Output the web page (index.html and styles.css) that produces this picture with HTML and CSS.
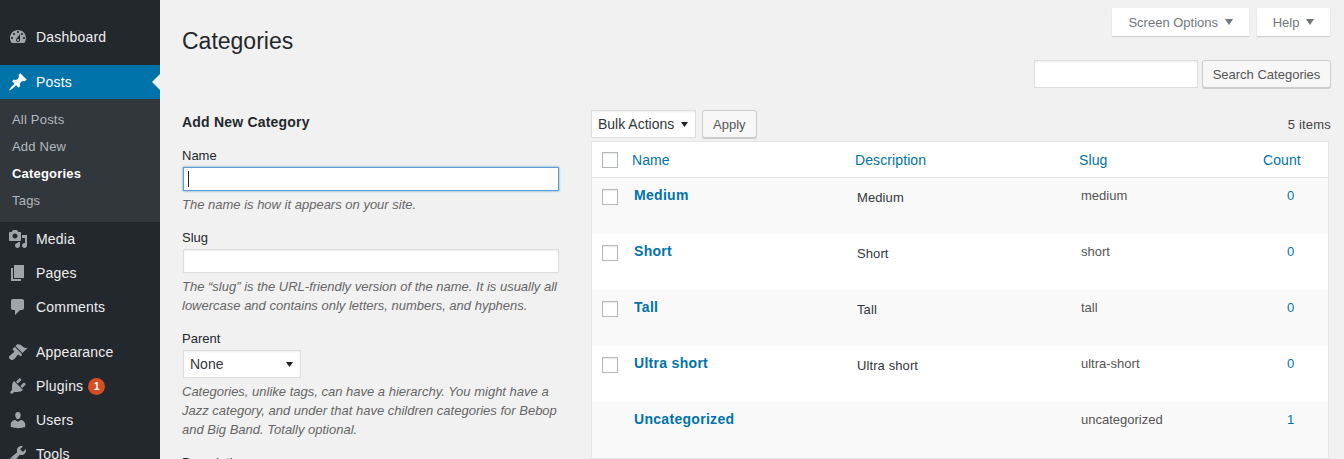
FILE: index.html
```html
<!DOCTYPE html>
<html lang="en">
<head>
    <meta charset="UTF-8">
    <title>Categories</title>
    <link rel="stylesheet" href="styles.css">
</head>
<body>
    <div class="wrap">
        <!-- admin menu -->
        <nav class="sidebar">
            <a class="menu-item" href="#">
                <svg class="icon" viewBox="0 0 20 20"><path d="M3.76 16h12.48c1.1-1.37 1.76-3.11 1.76-5 0-4.42-3.58-8-8-8s-8 3.58-8 8c0 1.89.66 3.63 1.76 5zM10 4c.55 0 1 .45 1 1s-.45 1-1 1-1-.45-1-1 .45-1 1-1zM6 6c.55 0 1 .45 1 1s-.45 1-1 1-1-.45-1-1 .45-1 1-1zm8 0c.55 0 1 .45 1 1s-.45 1-1 1-1-.45-1-1 .45-1 1-1zm-5.37 5.55L12 7v6c0 1.1-.9 2-2 2s-2-.9-2-2c0-.57.24-1.08.63-1.45zM4 10c.55 0 1 .45 1 1s-.45 1-1 1-1-.45-1-1 .45-1 1-1zm12 0c.55 0 1 .45 1 1s-.45 1-1 1-1-.45-1-1 .45-1 1-1zm-5 3c0-.55-.45-1-1-1s-1 .45-1 1 .45 1 1 1 1-.45 1-1z" fill-rule="evenodd"/></svg>
                Dashboard
            </a>
            <a class="menu-item current" href="#">
                <svg class="icon" viewBox="0 0 20 20"><path d="M10.44 3.02l1.82-1.82 6.36 6.35-1.83 1.82c-1.05-.68-2.48-.57-3.41.36l-.75.75c-.92.93-1.04 2.35-.35 3.41l-1.83 1.82-2.41-2.41-2.8 2.79c-.42.42-3.38 2.71-3.8 2.29s1.86-3.39 2.28-3.81l2.79-2.79L4.1 9.36l1.83-1.82c1.05.69 2.48.57 3.4-.36l.75-.75c.93-.92 1.05-2.35.36-3.41z"/></svg>
                Posts
            </a>
            <ul class="submenu">
                <li><a href="#">All Posts</a></li>
                <li><a href="#">Add New</a></li>
                <li><a class="active" href="#">Categories</a></li>
                <li><a href="#">Tags</a></li>
            </ul>
            <a class="menu-item" href="#">
                <svg class="icon" viewBox="0 0 20 20"><path d="M13 11V4c0-.55-.45-1-1-1h-1.67L9 1H5L3.67 3H2c-.55 0-1 .45-1 1v7c0 .55.45 1 1 1h10c.55 0 1-.45 1-1zM7 4.5c1.38 0 2.5 1.12 2.5 2.5S8.38 9.5 7 9.5 4.5 8.38 4.5 7 5.62 4.5 7 4.5zM14 6h5v10.5c0 1.38-1.12 2.5-2.5 2.5S14 17.88 14 16.5s1.12-2.5 2.5-2.5c.17 0 .34.02.5.05V9h-3V6zm-4 8.05V13h2v3.5c0 1.38-1.12 2.5-2.5 2.5S7 17.88 7 16.5 8.12 14 9.5 14c.17 0 .34.02.5.05z"/></svg>
                Media
            </a>
            <a class="menu-item" href="#">
                <svg class="icon" viewBox="0 0 20 20"><path d="M6 15V2h10v13H6zm-1 1h8v2H3V5h2v11z"/></svg>
                Pages
            </a>
            <a class="menu-item" href="#">
                <svg class="icon" viewBox="0 0 20 20"><path d="M5 2h9c1.1 0 2 .9 2 2v7c0 1.1-.9 2-2 2h-2l-5 5v-5H5c-1.1 0-2-.9-2-2V4c0-1.1.9-2 2-2z"/></svg>
                Comments
            </a>
            <div class="menu-sep"></div>
            <a class="menu-item" href="#">
                <svg class="icon" viewBox="0 0 20 20"><path d="M14.48 11.06L7.41 3.99l1.5-1.5c.5-.56 2.3-.47 3.51.32 1.21.8 1.43 1.28 2.91 2.1 1.18.64 2.45 1.26 4.45.85zm-.71.71L6.7 4.7 4.93 6.47c-.39.39-.39 1.02 0 1.41l1.06 1.06c.39.39.39 1.03 0 1.42-.6.6-1.43 1.11-2.21 1.69-.35.26-.7.53-1.01.84C1.43 13.23.99 14.3 1 15.5c.01.63.35 1.13.82 1.6.48.46 1 .82 1.65.82 1.2.01 2.27-.43 3.62-1.77.31-.31.58-.66.84-1.01.58-.78 1.09-1.61 1.69-2.21.39-.39 1.03-.39 1.42 0l1.06 1.06c.39.39 1.02.39 1.41 0z"/></svg>
                Appearance
            </a>
            <a class="menu-item" href="#">
                <svg class="icon" viewBox="0 0 20 20"><path d="M13.11 4.36L9.87 7.6 8 5.73l3.24-3.24c.35-.34 1.05-.2 1.56.32.52.51.66 1.21.31 1.55zm-8 1.77l.91-1.12 9.01 9.01-1.19.84c-.71.71-2.63 1.16-3.82 1.16H6.14L4.9 17.26c-.59.59-1.54.59-2.12 0-.59-.58-.59-1.53 0-2.12l1.24-1.24v-3.88c0-1.13.4-3.19 1.09-3.89zm7.26 3.97l3.24-3.24c.34-.35 1.04-.21 1.55.31.52.51.66 1.21.31 1.55l-3.24 3.25z"/></svg>
                Plugins <span class="badge">1</span>
            </a>
            <a class="menu-item" href="#">
                <svg class="icon" viewBox="0 0 20 20"><path d="M10 9.25c-2.27 0-2.73-3.44-2.73-3.44C7 4.02 7.82 2 9.97 2c2.16 0 2.98 2.02 2.71 3.81 0 0-.41 3.44-2.68 3.44zm0 2.57L12.72 10c2.39 0 4.52 2.33 4.52 4.53v2.49s-3.65 1.13-7.24 1.13c-3.65 0-7.24-1.13-7.24-1.13v-2.49c0-2.25 1.94-4.53 4.47-4.53z"/></svg>
                Users
            </a>
            <a class="menu-item" href="#">
                <svg class="icon" viewBox="0 0 20 20"><path d="M16.68 9.77c-1.34 1.34-3.3 1.67-4.95.99l-5.41 6.52c-.99.99-2.59.99-3.58 0s-.99-2.59 0-3.57l6.52-5.42c-.68-1.65-.35-3.61.99-4.95 1.28-1.28 3.12-1.62 4.72-1.06l-2.89 2.89 2.82 2.82 2.86-2.87c.53 1.58.18 3.39-1.08 4.65zM3.81 16.21c.4.39 1.04.39 1.43 0 .4-.4.4-1.04 0-1.43-.39-.4-1.03-.4-1.43 0-.39.39-.39 1.03 0 1.43z"/></svg>
                Tools
            </a>
        </nav>

        <div class="content">
            <div class="screen-tabs">
                <button class="tab" type="button">Screen Options <span class="tab-arrow"></span></button>
                <button class="tab" type="button">Help <span class="tab-arrow"></span></button>
            </div>

            <h1 class="page-title">Categories</h1>

            <div class="search-box">
                <input class="text-input search-input" type="text">
                <button class="btn search-btn" type="button">Search Categories</button>
            </div>

            <div class="columns">
                <!-- add form -->
                <form class="col-left">
                    <h2 class="form-title">Add New Category</h2>

                    <div class="field">
                        <label>Name</label>
                        <div class="caret-wrap"><input class="text-input full focus" type="text"></div>
                        <p class="hint">The name is how it appears on your site.</p>
                    </div>
                    <div class="field">
                        <label>Slug</label>
                        <input class="text-input full" type="text">
                        <p class="hint">The “slug” is the URL-friendly version of the name. It is usually all lowercase and contains only letters, numbers, and hyphens.</p>
                    </div>
                    <div class="field">
                        <label>Parent</label>
                        <select class="select parent-select"><option>None</option></select>
                        <p class="hint">Categories, unlike tags, can have a hierarchy. You might have a Jazz category, and under that have children categories for Bebop and Big Band. Totally optional.</p>
                    </div>
                    <div class="field">
                        <label>Description</label>
                    </div>
                </form>

                <!-- list -->
                <div class="col-right">
                    <div class="tablenav">
                        <select class="select bulk-select"><option>Bulk Actions</option></select>
                        <button class="btn" type="button">Apply</button>
                        <span class="num-items">5 items</span>
                    </div>
                    <table class="list">
                        <colgroup>
                            <col class="c-check"><col class="c-name"><col class="c-desc"><col class="c-slug"><col class="c-count">
                        </colgroup>
                        <thead>
                            <tr>
                                <th class="check"><input class="checkbox" type="checkbox"></th>
                                <th><a href="#">Name</a></th>
                                <th><a href="#">Description</a></th>
                                <th><a href="#">Slug</a></th>
                                <th class="count-head"><a href="#">Count</a></th>
                            </tr>
                        </thead>
                        <tbody>
                            <tr>
                                <td class="check"><input class="checkbox" type="checkbox"></td>
                                <td class="name"><a href="#">Medium</a></td>
                                <td class="desc">Medium</td>
                                <td class="slug">medium</td>
                                <td class="count"><a href="#">0</a></td>
                            </tr>
                            <tr>
                                <td class="check"><input class="checkbox" type="checkbox"></td>
                                <td class="name"><a href="#">Short</a></td>
                                <td class="desc">Short</td>
                                <td class="slug">short</td>
                                <td class="count"><a href="#">0</a></td>
                            </tr>
                            <tr>
                                <td class="check"><input class="checkbox" type="checkbox"></td>
                                <td class="name"><a href="#">Tall</a></td>
                                <td class="desc">Tall</td>
                                <td class="slug">tall</td>
                                <td class="count"><a href="#">0</a></td>
                            </tr>
                            <tr>
                                <td class="check"><input class="checkbox" type="checkbox"></td>
                                <td class="name"><a href="#">Ultra short</a></td>
                                <td class="desc">Ultra short</td>
                                <td class="slug">ultra-short</td>
                                <td class="count"><a href="#">0</a></td>
                            </tr>
                            <tr>
                                <td class="check"></td>
                                <td class="name"><a href="#">Uncategorized</a></td>
                                <td class="desc"></td>
                                <td class="slug">uncategorized</td>
                                <td class="count"><a href="#">1</a></td>
                            </tr>
                        </tbody>
                    </table>
                </div>
            </div>
        </div>
    </div>
</body>
</html>
```

FILE: styles.css
```css
*{
    margin: 0;
    padding: 0;
    box-sizing: border-box;
}
html, body{
    height: 459px;
    overflow: hidden;
}
body{
    background: #f1f1f1;
    color: #444;
    font-family: "Liberation Sans", Arial, sans-serif;
    font-size: 13px;
}
a{
    text-decoration: none;
    color: #0073aa;
}
.wrap{
    display: flex;
    height: 459px;
    overflow: hidden;
}

/* admin menu */
.sidebar{
    width: 160px;
    flex: none;
    background: #23282d;
    padding-top: 20px;
    height: 500px;
    letter-spacing: 0.2px;
}
.menu-item{
    display: flex;
    align-items: center;
    height: 34px;
    padding-left: 8px;
    gap: 8px;
    color: #eee;
    font-size: 14px;
    position: relative;
}
.menu-item:first-child{
    margin-bottom: 11px;
}
.icon{
    width: 20px;
    height: 20px;
    flex: none;
    fill: #a0a5aa;
}
.menu-item.current{
    background: #0073aa;
    color: #fff;
}
.menu-item.current .icon{
    fill: #fff;
}
.menu-item.current::after{
    content: "";
    position: absolute;
    right: 0;
    top: 50%;
    margin-top: -8px;
    border: 8px solid transparent;
    border-right-color: #f1f1f1;
}
.menu-sep{
    height: 11px;
}
.badge{
    width: 17px;
    height: 17px;
    border-radius: 50%;
    background: #d54e21;
    color: #fff;
    font-size: 10px;
    font-weight: bold;
    line-height: 17px;
    text-align: center;
    letter-spacing: 0;
    margin-left: -3px;
}
.submenu{
    list-style: none;
    background: #32373c;
    height: 123px;
    padding-top: 7px;
}
.submenu a{
    display: block;
    height: 27px;
    line-height: 27px;
    padding-left: 12px;
    color: #b4b9be;
}
.submenu a.active{
    color: #fff;
    font-weight: bold;
}

/* main */
.content{
    flex: 1;
    min-width: 0;
    padding: 0 13px 0 22px;
}
.screen-tabs{
    display: flex;
    justify-content: flex-end;
    gap: 8px;
    padding: 8px 1px 0 0;
}
.tab{
    height: 28px;
    padding: 0 16px;
    background: #fff;
    border: 0;
    box-shadow: 0 1px 1px rgba(0,0,0,.15);
    color: #72777c;
    font: inherit;
}
.tab-arrow{
    display: inline-block;
    margin-left: 3px;
    vertical-align: 2px;
    border: 4px solid transparent;
    border-top: 6px solid #72777c;
    border-bottom: 0;
}
.page-title{
    font-size: 23px;
    font-weight: normal;
    color: #23282d;
    line-height: 29px;
    margin-top: -9px;
}
.search-box{
    display: flex;
    justify-content: flex-end;
    gap: 4px;
    margin-top: 4px;
}
.text-input{
    display: block;
    height: 24px;
    background: #fff;
    border: 1px solid #ddd;
    box-shadow: inset 0 1px 2px rgba(0,0,0,.07);
    font: inherit;
    outline: 0;
}
.search-input{
    width: 164px;
    height: 28px;
}
.full{
    width: 376px;
}
.text-input.focus{
    border-color: #5b9dd9;
    box-shadow: 0 0 2px rgba(30,140,190,.8);
}
.caret-wrap{
    position: relative;
}
.caret-wrap::after{
    content: "";
    position: absolute;
    left: 6px;
    top: 4px;
    width: 1px;
    height: 16px;
    background: #222;
}
.btn{
    height: 28px;
    padding: 0 10px;
    background: #f7f7f7;
    border: 1px solid #ccc;
    border-radius: 3px;
    box-shadow: 0 1px 0 #ccc;
    color: #555;
    font: inherit;
}
.search-btn{
    width: 129px;
    padding: 0;
}
.select{
    display: block;
    height: 28px;
    padding-left: 6px;
    background: #fff url("data:image/svg+xml,%3Csvg xmlns='http://www.w3.org/2000/svg' width='7' height='5'%3E%3Cpath d='M0 0h7L3.5 5z' fill='%23222'/%3E%3C/svg%3E") no-repeat right 7px center;
    border: 1px solid #ddd;
    box-shadow: inset 0 1px 2px rgba(0,0,0,.07);
    appearance: none;
    color: #32373c;
    font: inherit;
    font-size: 14px;
    outline: 0;
}
.parent-select{
    width: 118px;
    margin-left: 1px;
    margin-bottom: 1px;
}
.bulk-select{
    width: 105px;
}

.columns{
    display: flex;
    margin-top: 22px;
}
.col-left{
    width: 409px;
    flex: none;
}
.form-title{
    font-size: 14px;
    font-weight: bold;
    color: #23282d;
    letter-spacing: 0.2px;
    line-height: 18px;
    margin-top: 3px;
    margin-bottom: 17px;
}
.field{
    margin-bottom: 16px;
}
.field label{
    display: block;
    color: #23282d;
    line-height: 16px;
    margin-bottom: 3px;
}
.field .text-input{
    margin-left: 1px;
}
.hint{
    color: #666;
    font-style: italic;
    line-height: 19px;
    margin-top: 4px;
    width: 385px;
}

.col-right{
    flex: 1;
    min-width: 0;
}
.tablenav{
    display: flex;
    align-items: center;
    gap: 6px;
    height: 28px;
    margin-bottom: 3px;
}
.num-items{
    margin-left: auto;
    letter-spacing: 0.2px;
}
.list{
    width: 738px;
    border-collapse: separate;
    border-spacing: 0;
    table-layout: fixed;
    background: #fff;
    border: 1px solid #e5e5e5;
}
.c-check{
    width: 30px;
}
.c-name{
    width: 223px;
}
.c-desc{
    width: 224px;
}
.c-slug{
    width: 184px;
}
.list th{
    height: 36px;
    font-weight: normal;
    font-size: 14px;
    letter-spacing: 0.1px;
    text-align: left;
    padding-left: 10px;
    border-bottom: 1px solid #e1e1e1;
}
.list td{
    height: 56px;
    vertical-align: top;
    padding: 11px 0 0 12px;
    line-height: 14px;
    font-size: 13px;
}
.list tbody tr:nth-child(odd){
    background: #f9f9f9;
}
.list .check{
    padding: 0 0 0 10px;
}
.list td.check{
    padding-top: 11px;
}
.list td.name{
    font-size: 14px;
    font-weight: bold;
    letter-spacing: 0.3px;
    padding-top: 10px;
}
.list td.desc{
    padding-top: 13px;
    color: #32373c;
    letter-spacing: 0.1px;
}
.list td.slug{
    color: #555;
}
.list td.count{
    text-align: center;
    padding: 11px 0 0 0;
}
.checkbox{
    display: block;
    appearance: none;
    width: 16px;
    height: 16px;
    background: #fff;
    border: 1px solid #b4b9be;
    box-shadow: inset 0 1px 2px rgba(0,0,0,.1);
}
```
